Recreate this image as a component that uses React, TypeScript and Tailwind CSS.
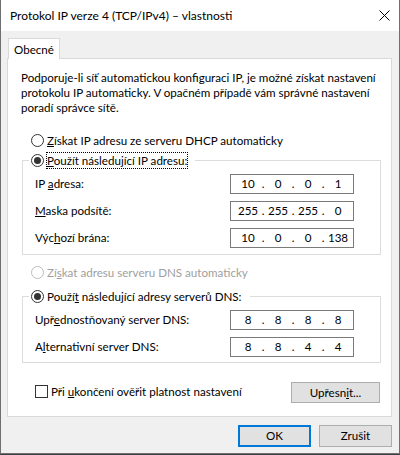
import React from "react";

const Radio = ({ checked, disabled }: { checked?: boolean; disabled?: boolean }) => (
	<span
		className={`flex h-[13px] w-[13px] shrink-0 items-center justify-center rounded-full border bg-white ${
			disabled ? "border-[#bcbcbc]" : "border-[#333333]"
		}`}>
		{checked && <span className="h-[7px] w-[7px] rounded-full bg-[#333333]" />}
	</span>
);

const IpBox = ({ parts }: { parts: string[] }) => (
	<div className="flex h-[20px] w-[124px] items-center border border-[#7a7a7a] bg-white pl-[6px]">
		{parts.map((p, i) => (
			<React.Fragment key={i}>
				{i > 0 && <span className="w-[8px] text-center">.</span>}
				<span className="w-[22px] text-center">{p}</span>
			</React.Fragment>
		))}
	</div>
);

const Row = ({ label, parts }: { label: React.ReactNode; parts: string[] }) => (
	<div className="flex h-[20px] items-center justify-between">
		<span>{label}</span>
		<IpBox parts={parts} />
	</div>
);

const App: React.FC = () => {
	return (
		<div className="h-[455px] w-[400px] whitespace-nowrap bg-[#3a3f47] font-['Lato','Liberation_Sans',sans-serif] text-[11.6px] text-black">
			<div className="flex h-[454px] flex-col border-x border-b border-[#6f6f6f]">
				{/* TITLE BAR */}
				<div className="flex h-[31px] shrink-0 items-center justify-between bg-white pl-[9px] pr-[9px]">
					<span className="text-[12px]">Protokol IP verze 4 (TCP/IPv4) – vlastnosti</span>
					<div className="flex h-[31px] w-[12px] items-center justify-center">
						<svg width="11" height="11" viewBox="0 0 11 11">
							<path d="M0.5 0.5L10.5 10.5M10.5 0.5L0.5 10.5" stroke="#000" strokeWidth="1" />
						</svg>
					</div>
				</div>

				{/* CLIENT */}
				<div className="flex flex-1 flex-col bg-[#f0f0f0] pl-[6px] pr-[7px] pt-[7px]">
					{/* TAB */}
					<div className="flex">
						<div className="relative z-10 -mb-px ml-[1px] flex h-[21px] w-[52px] items-center justify-center border-x border-t border-[#d9d9d9] bg-white pt-[1px]">
							Obecné
						</div>
					</div>

					{/* PANEL */}
					<div className="flex h-[359px] flex-col border border-[#d9d9d9] bg-white">
						<p className="ml-[13px] mt-[11px] leading-[15px]">
							Podporuje-li síť automatickou konfiguraci IP, je možné získat nastavení
							<br />
							protokolu IP automaticky. V opačném případě vám správné nastavení
							<br />
							poradí správce sítě.
						</p>

						<div className="ml-[23px] mt-[17px] flex h-[17px] items-center">
							<Radio />
							<span className="ml-[2px] border border-transparent">
								<span className="underline">Z</span>ískat IP adresu ze serveru DHCP automaticky
							</span>
						</div>

						{/* STATIC IP */}
						<fieldset className="ml-[14px] mt-[3px] w-[359px] border border-[#dcdcdc]">
							<legend className="ml-[6px] pl-[2px] pr-[7px]">
								<span className="flex h-[17px] items-center">
									<Radio checked />
									<span className="ml-[2px] border border-dotted border-black leading-[15px]">
										<span className="underline">P</span>oužít následující IP adresu:
									</span>
								</span>
							</legend>
							<div className="flex flex-col gap-[7px] pb-[6px] pl-[12px] pr-[26px] pt-[5px]">
								<Row
									label={
										<>
											IP <span className="underline">a</span>dresa:
										</>
									}
									parts={["10", "0", "0", "1"]}
								/>
								<Row
									label={
										<>
											<span className="underline">M</span>aska podsítě:
										</>
									}
									parts={["255", "255", "255", "0"]}
								/>
								<Row
									label={
										<>
											Výc<span className="underline">h</span>ozí brána:
										</>
									}
									parts={["10", "0", "0", "138"]}
								/>
							</div>
						</fieldset>

						<div className="ml-[23px] mt-[9px] flex h-[17px] items-center text-[#a0a0a0]">
							<Radio disabled />
							<span className="ml-[2px] border border-transparent">
								Zí<span className="underline">s</span>kat adresu serveru DNS automaticky
							</span>
						</div>

						{/* STATIC DNS */}
						<fieldset className="ml-[14px] mt-[7px] w-[359px] border border-[#dcdcdc]">
							<legend className="ml-[6px] pl-[2px] pr-[7px]">
								<span className="flex h-[17px] items-center">
									<Radio checked />
									<span className="ml-[2px] border border-transparent leading-[15px]">
										Použí<span className="underline">t</span> následující adresy serverů DNS:
									</span>
								</span>
							</legend>
							<div className="flex flex-col gap-[7px] pb-[5px] pl-[12px] pr-[26px] pt-[5px]">
								<Row
									label={
										<>
											Upř<span className="underline">e</span>dnostňovaný server DNS:
										</>
									}
									parts={["8", "8", "8", "8"]}
								/>
								<Row
									label={
										<>
											A<span className="underline">l</span>ternativní server DNS:
										</>
									}
									parts={["8", "8", "4", "4"]}
								/>
							</div>
						</fieldset>

						<div className="mt-[19px] flex h-[21px] items-center justify-between pl-[27px] pr-[11px]">
							<div className="flex items-center">
								<span className="mb-[2px] h-[13px] w-[13px] border border-[#333333] bg-white" />
								<span className="ml-[3px] mb-[1px]">
									Při <span className="underline">u</span>končení ověřit platnost nastavení
								</span>
							</div>
							<button className="flex h-[21px] w-[89px] items-center justify-center border border-[#adadad] bg-[#e1e1e1]">
								Upřesn<span className="underline">i</span>t...
							</button>
						</div>
					</div>

					{/* DIALOG BUTTONS */}
					<div className="mt-[8px] flex justify-end gap-[8px]">
						<button className="flex h-[22px] w-[73px] items-center justify-center border-2 border-[#0078d7] bg-[#e1e1e1]">
							OK
						</button>
						<button className="flex h-[22px] w-[73px] items-center justify-center border border-[#adadad] bg-[#e1e1e1]">
							Zrušit
						</button>
					</div>
				</div>
			</div>
		</div>
	);
};

export default App;
